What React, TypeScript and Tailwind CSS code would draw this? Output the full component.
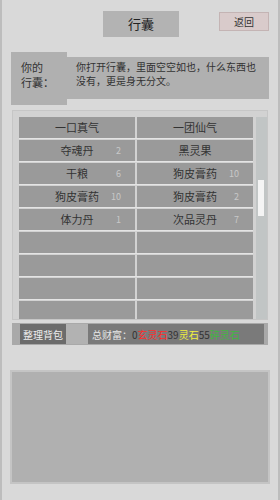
import React from 'react';

const items: { name: string; count?: string }[][] = [
    [{ name: '一口真气' }, { name: '一团仙气' }],
    [{ name: '夺魂丹', count: '2' }, { name: '黑灵果' }],
    [{ name: '干粮', count: '6' }, { name: '狗皮膏药', count: '10' }],
    [{ name: '狗皮膏药', count: '10' }, { name: '狗皮膏药', count: '2' }],
    [{ name: '体力丹', count: '1' }, { name: '次品灵丹', count: '7' }],
    [{ name: '' }, { name: '' }],
    [{ name: '' }, { name: '' }],
    [{ name: '' }, { name: '' }],
    [{ name: '' }, { name: '' }],
];

const Cell = ({ name, count }: { name: string; count?: string }) => (
    <div className="relative flex-1 h-[21px] bg-[#9a9a9a] flex items-center justify-center">
        <span className="text-[11px] text-[#333]">{name}</span>
        {count && (
            <span className="absolute right-[14px] text-[9px] text-[#c8c8c8]">{count}</span>
        )}
    </div>
);

export default function App() {
    return (
        <div
            className="w-[280px] h-[500px] bg-[#d9d9d9] overflow-hidden border-x-2 border-[#bdbdbd] relative"
            style={{ fontFamily: '"Noto Sans CJK SC", "Liberation Sans", sans-serif' }}
        >
            {/* header */}
            <div className="h-[52px] relative">
                <div className="absolute left-[101px] top-[11px] w-[76px] h-[26px] bg-[#b3b3b3] flex items-center justify-center text-[13px] text-[#222]">
                    行囊
                </div>
                <div className="absolute left-[217px] top-[12px] w-[50px] h-[19px] bg-[#d9cbcb] border border-[#c4b4b4] flex items-center justify-center text-[10px] text-[#333]">
                    返回
                </div>
            </div>

            {/* intro */}
            <div className="flex mx-[9px] h-[53px]">
                <div className="w-[56px] bg-[#b0b0b0] px-[10px] pt-[8px] text-[11px] leading-[15px] text-[#333]">
                    你的<br />行囊：
                </div>
                <div className="flex-1 mt-[5px] h-[42px] bg-[#b0b0b0] pl-[9px] pr-[4px] pt-[3px] text-[10px] leading-[14px] text-[#333]">
                    你打开行囊，里面空空如也，什么东西也没有，更是身无分文。
                </div>
            </div>

            {/* inventory */}
            <div className="mx-[10px] mt-[5px] h-[210px] bg-[#d2d2d2] border border-[#c6c6c6] flex pl-[6px] pt-[6px] overflow-hidden">
                <div className="w-[235px] flex flex-col gap-[1px]">
                    {items.map((row, i) => (
                        <div key={i} className="flex gap-[2px] border-b border-[#e4e4e4]">
                            <Cell {...row[0]} />
                            <Cell {...row[1]} />
                        </div>
                    ))}
                </div>
                <div className="ml-[3px] w-[11px] bg-[#c1c5c5] relative">
                    <div className="absolute left-[2px] top-[63px] w-[6px] h-[36px] bg-[#f4f4f4]" />
                </div>
            </div>

            {/* bottom bar */}
            <div className="mx-[10px] mt-[3px] h-[22px] bg-[#a9a9a9] flex items-center pl-[8px] pr-[4px]">
                <div className="w-[46px] h-[20px] bg-[#6c6c6c] text-[#eee] text-[10px] flex items-center justify-center">
                    整理背包
                </div>
                <div className="w-[22px] h-[20px] bg-[#b2b2b2]" />
                <div className="flex-1 h-[20px] bg-[#7a7a7a] flex items-center pl-[4px] text-[10px] whitespace-nowrap">
                    <span className="text-[#e6e6e6]">总财富：</span>
                    <span className="text-[#333]">0</span>
                    <span className="text-[#ff2a2a]">玄灵石</span>
                    <span className="text-[#333]">39</span>
                    <span className="text-[#f2f23a]">灵石</span>
                    <span className="text-[#333]">55</span>
                    <span className="text-[#3fb83f]">碎灵石</span>
                </div>
            </div>

            {/* lower panel */}
            <div className="mx-[8px] mt-[25px] h-[114px] bg-[#b0b0b0] border-2 border-[#c4c4c4]" />
        </div>
    );
}
